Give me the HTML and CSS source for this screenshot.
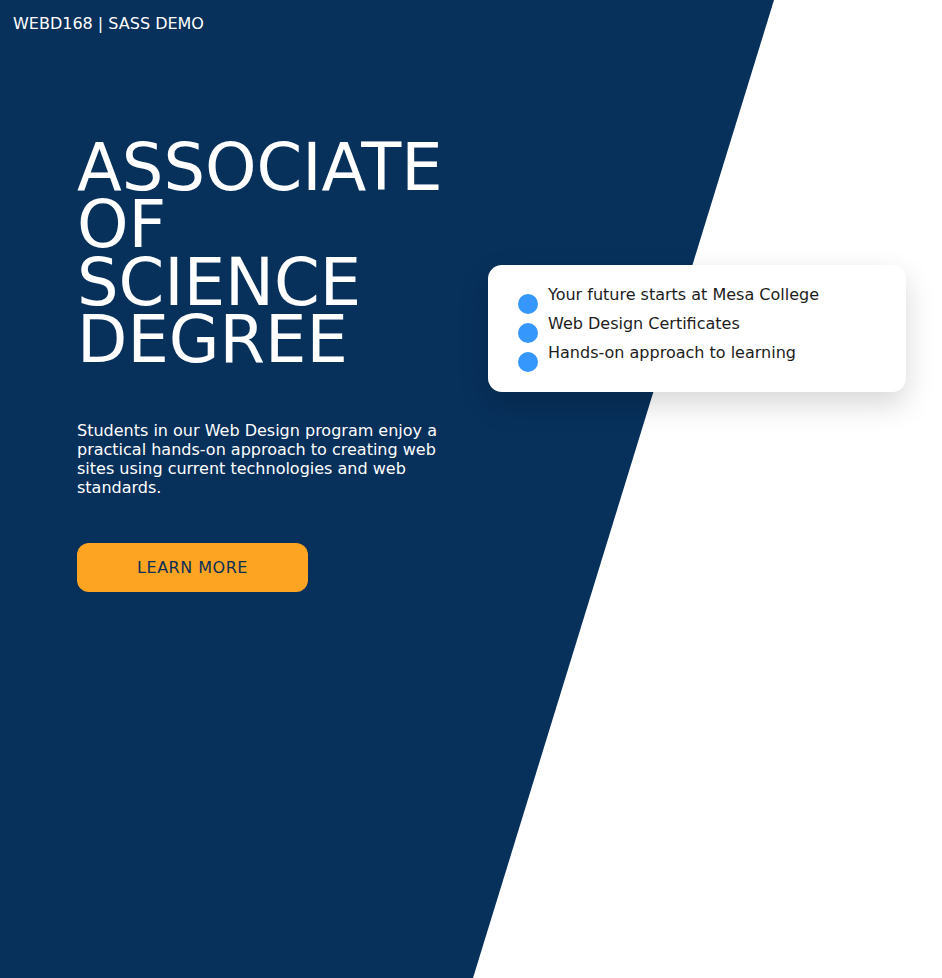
FILE: index.html
```html
<!DOCTYPE html>
<html lang="en">
<head>
<meta charset="utf-8">
<title>WEBD168 | SASS DEMO</title>
<link rel="stylesheet" href="styles.css">
</head>
<body>
<div class="page">
  <header class="site-header">WEBD168 | SASS DEMO</header>
  <main class="hero">
    <section class="hero-main">
      <h1 class="hero-title">ASSOCIATE OF SCIENCE DEGREE</h1>
      <p class="hero-text">Students in our Web Design program enjoy a practical hands-on approach to creating web sites using current technologies and web standards.</p>
      <a class="btn" href="#">LEARN MORE</a>
    </section>
    <aside class="card">
      <ul class="card-list">
        <li>Your future starts at Mesa College</li>
        <li>Web Design Certificates</li>
        <li>Hands-on approach to learning</li>
      </ul>
    </aside>
  </main>
</div>
</body>
</html>
```
FILE: styles.css
```css
* { box-sizing: border-box; }

html, body {
  margin: 0;
  padding: 0;
  background: #ffffff;
}

body {
  font-family: "DejaVu Sans", "Liberation Sans", sans-serif;
  color: #ffffff;
}

.page {
  position: relative;
  min-height: 978px;
  overflow: hidden;
}

.page::before {
  content: "";
  position: absolute;
  inset: 0;
  background: #07305b;
  clip-path: polygon(0 0, 774px 0, 473px 978px, 0 978px);
  z-index: 0;
}

.site-header {
  position: relative;
  z-index: 1;
  padding: 14px 13px 0;
  font-size: 16px;
  line-height: 20px;
  height: 34px;
}

.hero {
  position: relative;
  z-index: 1;
  display: flex;
  align-items: flex-start;
  padding: 105px 0 0 77px;
}

.hero-main {
  width: 380px;
  flex: none;
}

.hero-title {
  margin: 0;
  font-size: 65.5px;
  line-height: 57.4px;
  font-weight: 400;
  width: 380px;
}

.hero-text {
  margin: 52px 0 0;
  font-size: 16px;
  line-height: 19px;
  width: 372px;
}

.btn {
  display: flex;
  align-items: center;
  justify-content: center;
  margin-top: 46.5px;
  width: 231px;
  height: 49px;
  border-radius: 12px;
  background: #fda422;
  color: #0b2f57;
  font-size: 16px;
  letter-spacing: 0.5px;
  text-decoration: none;
}

.card {
  flex: none;
  margin: 126px 0 0 31px;
  width: 418px;
  height: 127px;
  background: #ffffff;
  border-radius: 14px;
  box-shadow: 0 12px 30px rgba(0, 0, 0, 0.16);
  padding: 19.5px 20px 20px 30px;
}

.card-list {
  list-style: none;
  margin: 0;
  padding: 0;
  color: #1c1c1c;
  font-size: 16px;
}

.card-list li {
  display: flex;
  gap: 10px;
  height: 29px;
  line-height: 19px;
}

.card-list li::before {
  content: "";
  flex: none;
  width: 20px;
  height: 20px;
  margin-top: 9px;
  border-radius: 50%;
  background: #3597fb;
}
```
